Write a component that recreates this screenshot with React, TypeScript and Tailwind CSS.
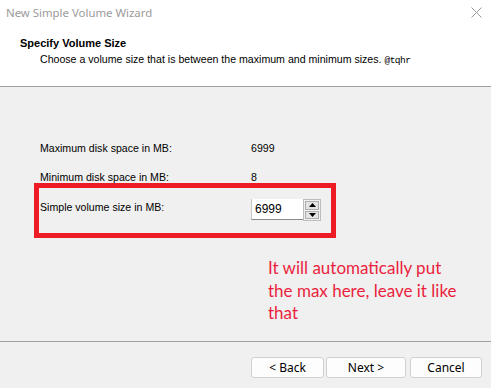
const SpinArrow = ({ up }: { up?: boolean }) => (
  <svg width="7" height="4" viewBox="0 0 7 4">
    {up ? <polygon points="0,4 7,4 3.5,0" fill="#000" /> : <polygon points="0,0 7,0 3.5,4" fill="#000" />}
  </svg>
);

const WinButton = ({ label, w }: { label: string; w: string }) => (
  <div
    className={`${w} h-[21px] flex items-center justify-center rounded-[3px] border border-[#d0d0d0] bg-[#fdfdfd] text-[12px] text-black`}
  >
    {label}
  </div>
);

const App: React.FC = () => {
  return (
    <div className="w-[491px] h-[388px] bg-[#f0f0f0] flex flex-col overflow-hidden font-['Liberation_Sans',Arial,sans-serif] text-[10.6px] leading-[13px] text-black">
      {/* title bar */}
      <div className="h-[25px] bg-white flex items-center justify-between pl-[6px] pr-[9px]">
        <span className="font-['Noto_Sans',sans-serif] text-[11.4px] text-[#9b9b9b] -mt-[1px]">New Simple Volume Wizard</span>
        <svg width="11" height="11" viewBox="0 0 11 11" className="-mt-[1px]">
          <path d="M0.5 0.5 L10.5 10.5 M10.5 0.5 L0.5 10.5" stroke="#9a9a9a" strokeWidth="1" />
        </svg>
      </div>

      {/* header */}
      <div className="h-[62px] bg-white border-b border-[#a0a0a0] pt-[12px] flex flex-col gap-[3px]">
        <div className="pl-[20px] font-bold text-[11px]">Specify Volume Size</div>
        <div className="pl-[40px]">
          Choose a volume size that is between the maximum and minimum sizes.{" "}
          <span className="font-['Liberation_Mono',monospace] text-[9.5px] tracking-[-0.5px]">@tqhr</span>
        </div>
      </div>

      {/* body */}
      <div className="flex-1 flex flex-col pt-[55px]">
        <div className="flex pl-[40px]">
          <span className="w-[211px]">Maximum disk space in MB:</span>
          <span>6999</span>
        </div>
        <div className="flex pl-[40px] mt-[16px]">
          <span className="w-[211px]">Minimum disk space in MB:</span>
          <span>8</span>
        </div>

        <div className="ml-[34px] mt-[-1px] w-[302px] h-[55px] border-[5px] border-[#ed1c24] pt-[11px] pl-[1px] flex items-start">
          <span className="w-[211px] mt-[2px]">Simple volume size in MB:</span>
          <div className="flex">
            <div className="w-[52px] h-[21px] bg-white border-b border-l border-[#8a8a8a] border-l-[#c8c8c8] flex items-center pl-[3px] text-[12px]">
              6999
            </div>
            <div className="w-[18px] h-[22px] border border-[#bdbdbd] flex flex-col gap-[1px] p-[1px]">
              <div className="flex-1 bg-[#e4e4e4] border border-[#adadad] flex items-center justify-center">
                <SpinArrow up />
              </div>
              <div className="flex-1 bg-[#e4e4e4] border border-[#adadad] flex items-center justify-center">
                <SpinArrow />
              </div>
            </div>
          </div>
        </div>

        <div className="ml-[268px] mt-[19px] font-['Lato',sans-serif] text-[17px] leading-[22.5px] text-[#ea1f3d]">
          <div>It will automatically put</div>
          <div>the max here, leave it like</div>
          <div>that</div>
        </div>
      </div>

      {/* footer */}
      <div className="h-[47px] border-t border-[#a0a0a0] flex items-start pt-[15px] pl-[251px] font-['Noto_Sans',sans-serif]">
        <WinButton label="< Back" w="w-[73px]" />
        <div className="ml-[2px]">
          <WinButton label="Next >" w="w-[80px]" />
        </div>
        <div className="ml-[4px]">
          <WinButton label="Cancel" w="w-[72px]" />
        </div>
      </div>
    </div>
  );
};

export default App;
